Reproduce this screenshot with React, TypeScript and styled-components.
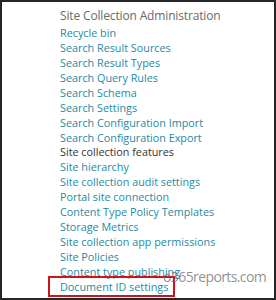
import styled, { createGlobalStyle } from 'styled-components';

const GlobalStyle = createGlobalStyle`
  html, body {
    margin: 0;
    padding: 0;
    background: #fff;
  }
`;

const links = [
  { label: 'Recycle bin' },
  { label: 'Search Result Sources' },
  { label: 'Search Result Types' },
  { label: 'Search Query Rules' },
  { label: 'Search Schema' },
  { label: 'Search Settings' },
  { label: 'Search Configuration Import' },
  { label: 'Search Configuration Export' },
  { label: 'Site collection features', visited: true },
  { label: 'Site hierarchy' },
  { label: 'Site collection audit settings' },
  { label: 'Portal site connection' },
  { label: 'Content Type Policy Templates' },
  { label: 'Storage Metrics' },
  { label: 'Site collection app permissions' },
  { label: 'Site Policies' },
  { label: 'Content type publishing' },
  { label: 'Document ID settings', highlight: true },
];

const App = () => {
  return (
    <>
      <GlobalStyle />
      <Frame>
        <Section>
          <Title>Site Collection Administration</Title>
          <LinkList>
            {links.map((l) => (
              <Item key={l.label}>
                {l.highlight ? (
                  <Highlight>
                    <Link $visited={l.visited}>{l.label}</Link>
                  </Highlight>
                ) : (
                  <Link $visited={l.visited}>{l.label}</Link>
                )}
              </Item>
            ))}
          </LinkList>
        </Section>
        <Watermark>o365reports.com</Watermark>
      </Frame>
    </>
  );
};

const Frame = styled.div`
  position: relative;
  box-sizing: border-box;
  width: 276px;
  height: 300px;
  border: 2px solid #262626;
  overflow: hidden;
  font-family: 'Open Sans', 'Noto Sans', sans-serif;
`;

const Section = styled.div`
  padding: 5px 0 0 58px;
`;

const Title = styled.h3`
  margin: 0;
  font-size: 12px;
  font-weight: 400;
  letter-spacing: -0.15px;
  line-height: 18px;
  color: #6a6a6a;
`;

const LinkList = styled.ul`
  list-style: none;
  margin: 0;
  padding: 0;
`;

const Item = styled.li`
  display: flex;
  align-items: center;
  height: 14.94px;
  white-space: nowrap;
`;

const Link = styled.a<{ $visited?: boolean }>`
  font-size: 10.8px;
  line-height: 15px;
  color: ${(p) => (p.$visited ? '#333333' : '#1e8aa3')};
  text-decoration: none;
  cursor: pointer;
`;

const Highlight = styled.span`
  display: flex;
  align-items: center;
  flex: none;
  box-sizing: border-box;
  margin-left: -12px;
  padding: 0 5px 0 10px;
  height: 21px;
  border: 2px solid #d0121b;
`;

const Watermark = styled.div`
  position: absolute;
  left: 161px;
  top: 266px;
  font-size: 14px;
  letter-spacing: -0.6px;
  line-height: 18px;
  color: rgba(100, 100, 100, 0.72);
  pointer-events: none;
`;

export default App;
